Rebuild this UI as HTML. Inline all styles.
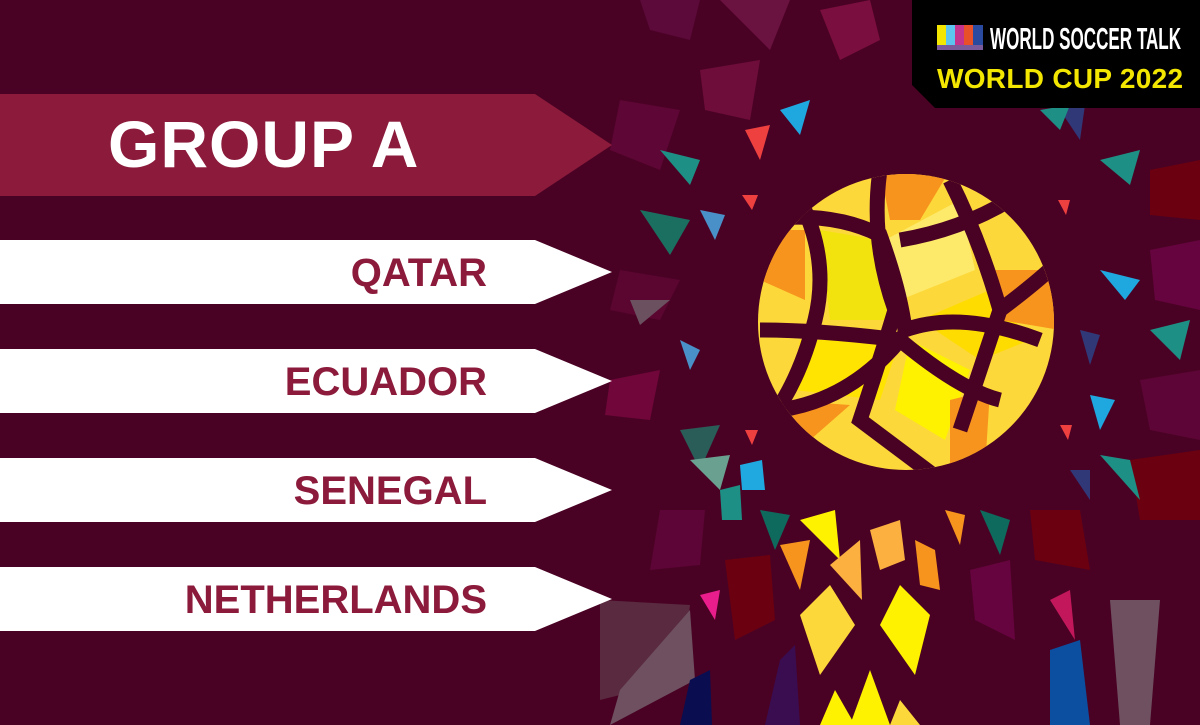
<!DOCTYPE html>
<html><head><meta charset="utf-8"><style>
html,body{margin:0;padding:0}
body{width:1200px;height:725px;overflow:hidden;background:#4a0224;font-family:"Liberation Sans",sans-serif;position:relative}
svg{position:absolute;left:0;top:0}
.t{position:absolute;font-weight:bold;text-align:right}
</style></head><body>
<svg width="1200" height="725" viewBox="0 0 1200 725">
<rect width="1200" height="725" fill="#4a0224"/>
<g>
<polygon points="640,0 700,0 690,40 650,30" fill="#5b0a3a"/>
<polygon points="720,0 790,0 770,50" fill="#6a1240"/>
<polygon points="820,10 870,0 880,40 840,60" fill="#7a0e3e"/>
<polygon points="700,70 760,60 750,120 705,110" fill="#6e0d3a"/>
<polygon points="620,100 680,110 660,170 610,150" fill="#5e0636"/>
<polygon points="780,110 810,100 800,135" fill="#1fa7e0"/>
<polygon points="660,150 700,160 690,185" fill="#1e8f85"/>
<polygon points="640,210 690,220 670,255" fill="#1b6f60"/>
<polygon points="700,210 725,215 715,240" fill="#4a90c8"/>
<polygon points="620,270 680,280 660,320 610,310" fill="#5a0630"/>
<polygon points="630,300 670,300 640,325" fill="#6b5060"/>
<polygon points="680,340 700,350 690,370" fill="#4a90c8"/>
<polygon points="610,380 660,370 650,420 605,415" fill="#70063a"/>
<polygon points="680,430 720,425 700,470" fill="#2a5c58"/>
<polygon points="690,460 730,455 720,490" fill="#6aa090"/>
<polygon points="740,465 762,460 765,490 742,490" fill="#20a8e0"/>
<polygon points="760,510 790,515 775,550" fill="#0f6a5e"/>
<polygon points="660,510 705,510 700,565 650,570" fill="#5c0536"/>
<polygon points="725,560 770,555 775,620 735,640" fill="#6a0010"/>
<polygon points="600,600 690,605 680,680 600,700" fill="#5a2a40"/>
<polygon points="690,610 695,680 610,725 620,690" fill="#6e5060"/>
<polygon points="690,680 710,670 712,725 680,725" fill="#0a0d50"/>
<polygon points="780,660 795,645 800,725 765,725" fill="#3a0c50"/>
<polygon points="800,520 835,510 840,560" fill="#fff200" />
<polygon points="780,545 810,540 800,590" fill="#f7941d"/>
<polygon points="830,565 860,540 862,600" fill="#fbb040"/>
<polygon points="800,615 830,585 855,625 820,675" fill="#fdd83a"/>
<polygon points="900,585 930,615 915,675 880,625" fill="#fff200"/>
<polygon points="870,530 900,520 905,560 880,570" fill="#fbb040"/>
<polygon points="915,540 935,550 940,590 920,585" fill="#f7941d"/>
<polygon points="870,670 890,725 850,725" fill="#fff200"/>
<polygon points="835,690 855,725 820,725" fill="#fff200"/>
<polygon points="900,700 920,725 890,725" fill="#fdd83a"/>
<polygon points="945,510 965,515 960,545" fill="#f7941d"/>
<polygon points="980,510 1010,520 1000,555" fill="#0f6a5e"/>
<polygon points="1030,510 1080,510 1090,570 1035,560" fill="#6a0010"/>
<polygon points="970,570 1010,560 1015,640 975,620" fill="#65043e"/>
<polygon points="1050,600 1070,590 1075,640" fill="#c2185b"/>
<polygon points="1050,650 1080,640 1090,725 1050,725" fill="#0c4fa0"/>
<polygon points="1110,600 1160,600 1150,725 1120,725" fill="#6e5060"/>
<polygon points="1130,460 1200,450 1200,520 1140,520" fill="#6a0010"/>
<polygon points="1100,455 1130,460 1140,500" fill="#1e8f85"/>
<polygon points="1070,470 1090,470 1090,500" fill="#303877"/>
<polygon points="1150,250 1200,240 1200,310 1155,300" fill="#65043e"/>
<polygon points="1100,160 1140,150 1130,185" fill="#1e8f85"/>
<polygon points="1100,270 1140,280 1125,300" fill="#1fa7e0"/>
<polygon points="1150,330 1190,320 1180,360" fill="#1e8f85"/>
<polygon points="1080,330 1100,335 1090,365" fill="#303877"/>
<polygon points="1150,170 1200,160 1200,220 1150,215" fill="#6a0010"/>
<polygon points="1060,110 1085,105 1080,140" fill="#303877"/>
<polygon points="1140,380 1200,370 1200,440 1150,430" fill="#5c0536"/>
<polygon points="1090,395 1115,400 1100,430" fill="#1fa7e0"/>
<polygon points="1040,110 1070,105 1060,130" fill="#1e8f85"/>
<polygon points="745,130 770,125 760,160" fill="#ef4040"/>
<polygon points="742,195 758,195 752,210" fill="#ef4040"/>
<polygon points="745,430 758,430 752,445" fill="#ef4040"/>
<polygon points="1058,200 1070,200 1066,215" fill="#ef4040"/>
<polygon points="1060,425 1072,425 1068,440" fill="#ef4040"/>
<polygon points="720,490 740,485 742,520 722,520" fill="#1e8f85"/>
<polygon points="700,595 720,590 715,620" fill="#e91e8c"/>
</g>
<circle cx="906" cy="322" r="152" fill="#4a0224"/>
<clipPath id="c"><circle cx="906" cy="322" r="148"/></clipPath>
<g clip-path="url(#c)">
<rect x="750" y="170" width="310" height="310" fill="#fdd83a"/>
<polygon points="820,230 880,240 890,320 830,320" fill="#f2e30f"/>
<polygon points="885,240 960,200 975,270 900,300" fill="#fde96a"/>
<polygon points="920,320 990,290 1030,340 980,360" fill="#fedc00"/>
<polygon points="800,340 900,340 880,400 795,390" fill="#fee400"/>
<polygon points="910,340 970,370 945,440 895,410" fill="#fff200"/>
<polygon points="880,170 950,170 920,220 890,220" fill="#f7941d"/>
<polygon points="760,230 805,230 805,300 760,280" fill="#f7941d"/>
<polygon points="990,270 1060,270 1060,330 1000,320" fill="#f7941d"/>
<polygon points="780,400 850,405 810,440" fill="#f7941d"/>
<polygon points="950,400 990,390 985,470 950,470" fill="#f7941d"/>
<g fill="none" stroke="#4a0224" stroke-width="15">
<path d="M760,220 Q830,210 880,235 Q900,290 905,330 Q960,310 1040,340"/>
<path d="M880,170 Q870,240 895,310 Q880,360 860,420 Q900,450 940,480"/>
<path d="M760,330 Q820,330 900,340"/>
<path d="M800,200 Q830,260 815,320 Q800,380 770,420"/>
<path d="M950,180 Q980,240 1000,310 Q980,370 960,430"/>
<path d="M780,410 Q850,400 900,340 Q960,390 1000,400"/>
<path d="M900,240 Q960,230 1010,200"/>
<path d="M1000,310 Q1040,280 1060,260"/>
</g>
</g>
<polygon points="0,94 535,94 612,145 535,196 0,196" fill="#8b1a3b"/>
<polygon points="0,240 535,240 612,272 535,304 0,304" fill="#fff"/>
<polygon points="0,349 535,349 612,381 535,413 0,413" fill="#fff"/>
<polygon points="0,458 535,458 612,490 535,522 0,522" fill="#fff"/>
<polygon points="0,567 535,567 612,599 535,631 0,631" fill="#fff"/>
<polygon points="912,0 1200,0 1200,108 935,108 912,85" fill="#000"/>
<g>
<rect x="937" y="25" width="9" height="23" fill="#f3e600"/>
<rect x="946" y="25" width="9" height="23" fill="#5cc4ee"/>
<rect x="955" y="25" width="9" height="23" fill="#c4338e"/>
<rect x="964" y="25" width="9" height="23" fill="#e8502a"/>
<rect x="973" y="25" width="10" height="23" fill="#2a4aa0"/>
<rect x="937" y="45" width="46" height="5" fill="#7a5a9a"/>
</g>
</svg>
<div class="t" style="left:108px;top:106px;font-size:66px;color:#fff;text-align:left;letter-spacing:1px">GROUP A</div>
<div class="t" style="right:713px;top:251px;font-size:40px;color:#8b1a3b">QATAR</div>
<div class="t" style="right:713px;top:360px;font-size:40px;color:#8b1a3b">ECUADOR</div>
<div class="t" style="right:713px;top:469px;font-size:40px;color:#8b1a3b">SENEGAL</div>
<div class="t" style="right:713px;top:578px;font-size:40px;color:#8b1a3b">NETHERLANDS</div>
<div class="t" style="left:990px;top:21px;font-size:31px;color:#fff;text-align:left;transform:scaleX(0.55);transform-origin:0 0;white-space:nowrap">WORLD SOCCER TALK</div>
<div class="t" style="left:937px;top:63px;font-size:28px;color:#f3e600;text-align:left;white-space:nowrap;letter-spacing:0.3px">WORLD CUP 2022</div>
</body></html>
